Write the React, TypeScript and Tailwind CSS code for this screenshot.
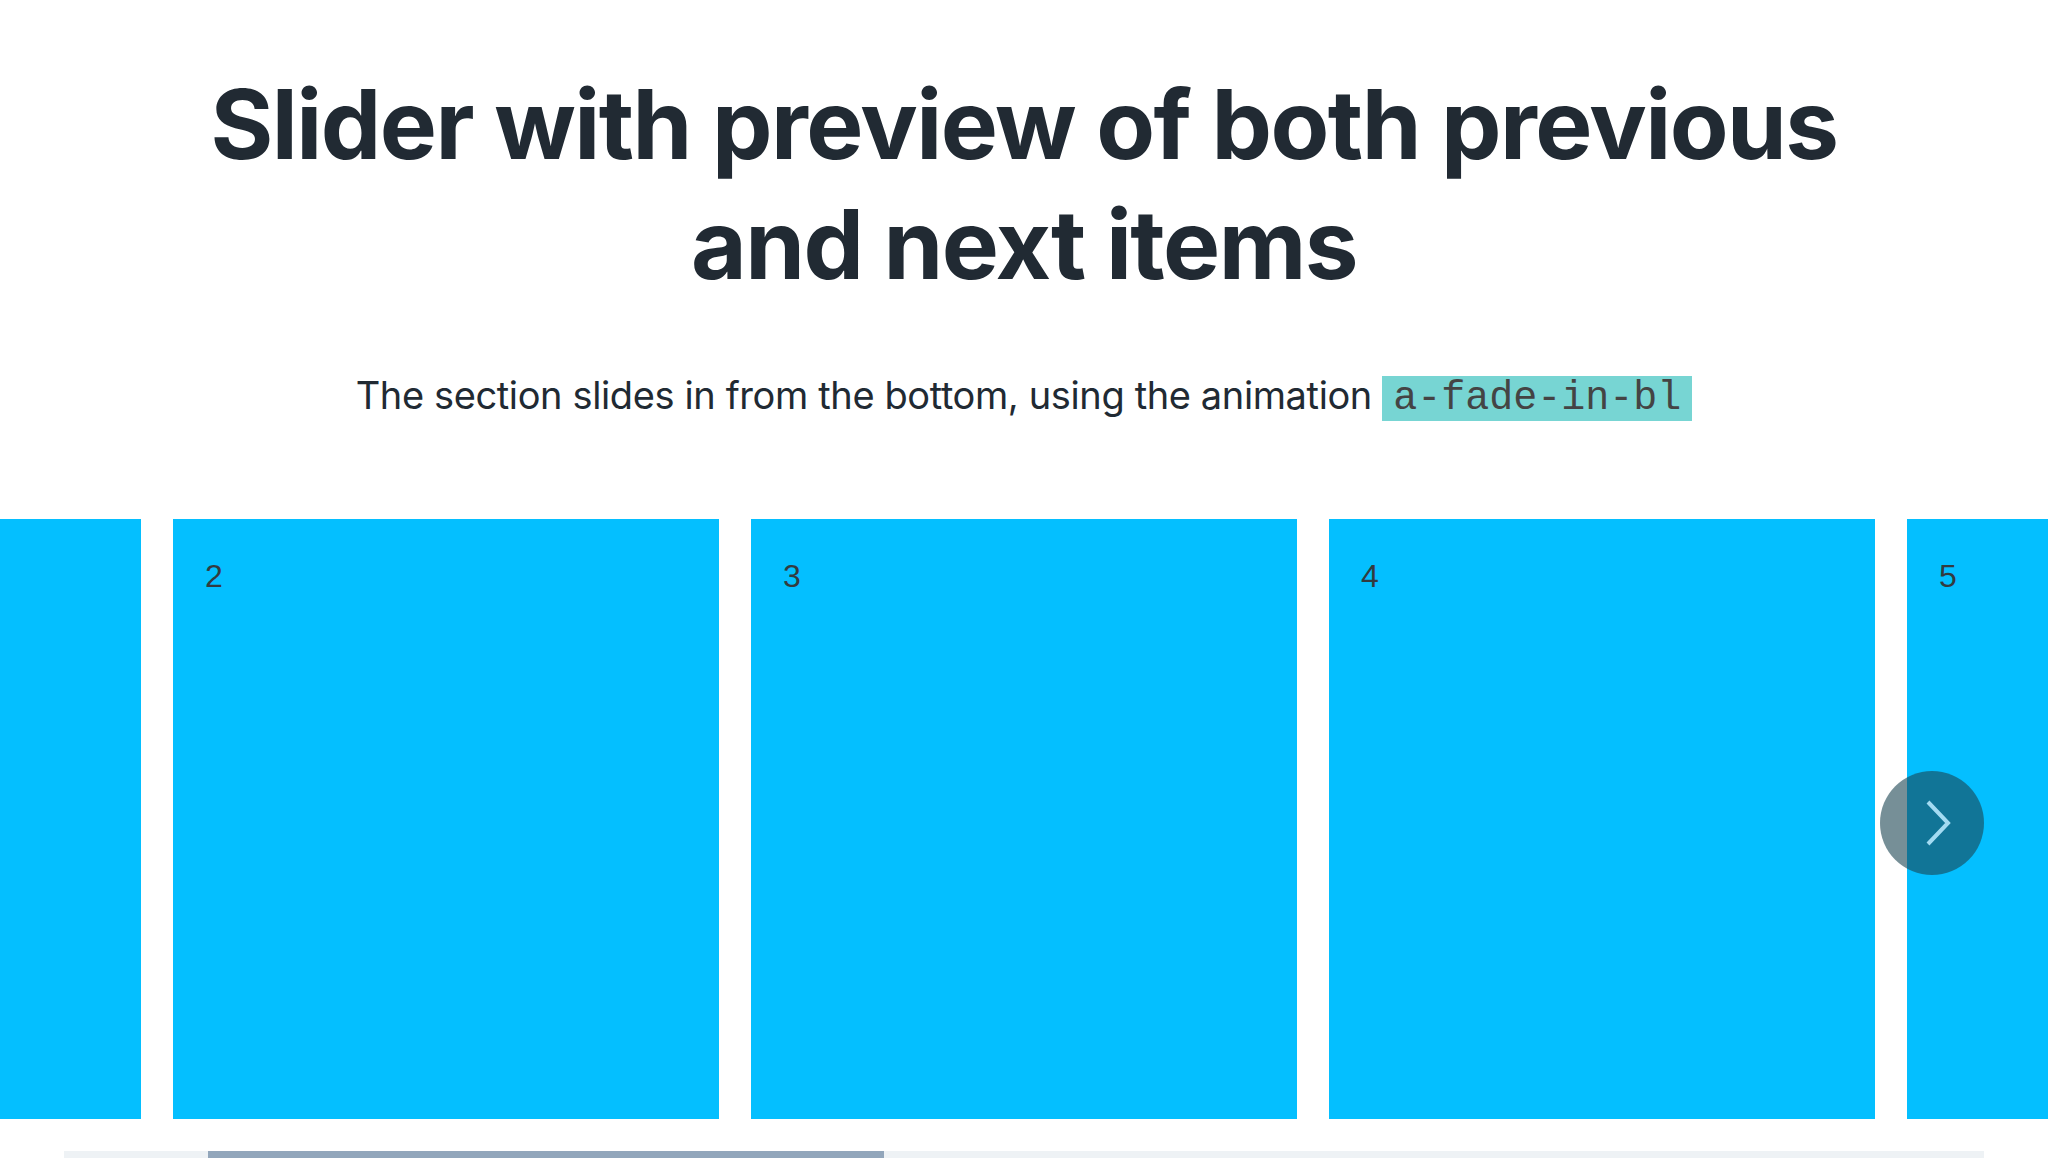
const slides = [1, 2, 3, 4, 5];

function Slide({ n }: { n: number }) {
  return (
    <div className="w-[546px] h-[600px] shrink-0 bg-[#04bfff] pl-8 pt-[33px]">
      <span className="text-[32px] text-[#333b40] font-['Liberation_Sans',Arial,sans-serif]">{n}</span>
    </div>
  );
}

export default function App() {
  return (
    <div className="min-h-screen bg-white font-['Inter',sans-serif] text-[#212a33]">
      <h1 className="pt-16 text-center text-[96px] leading-[120px] font-bold tracking-[-0.016em]">
        Slider with preview of both previous
        <br />
        and next items
      </h1>

      <p className="mt-[61px] text-center text-[38px] leading-[60px] tracking-[-0.01em]">
        The section slides in from the bottom, using the animation{" "}
        <code className="bg-[#77d5d3] px-[11px] text-[#444] font-['Liberation_Mono','Courier_New',monospace] text-[40px] font-normal tracking-normal">
          a-fade-in-bl
        </code>
      </p>

      {/* slider */}
      <div className="relative mt-[90px]">
        <div className="flex justify-center gap-8 overflow-hidden">
          {slides.map((n) => (
            <Slide key={n} n={n} />
          ))}
        </div>

        <button className="absolute right-16 top-[252px] w-[104px] h-[104px] rounded-full bg-[rgba(27,68,82,0.6)] flex items-center justify-center">
          <svg width="26" height="46" viewBox="0 0 26 46" className="ml-3" fill="none">
            <polyline points="3,2 23,23 3,44" stroke="#a3dbf2" strokeWidth="4" />
          </svg>
        </button>
      </div>

      {/* scroll indicator */}
      <div className="mx-16 mt-8 h-2 bg-[#eef2f5]">
        <div className="ml-[144px] w-[676px] h-full bg-[#92a6bb]" />
      </div>
    </div>
  );
}
